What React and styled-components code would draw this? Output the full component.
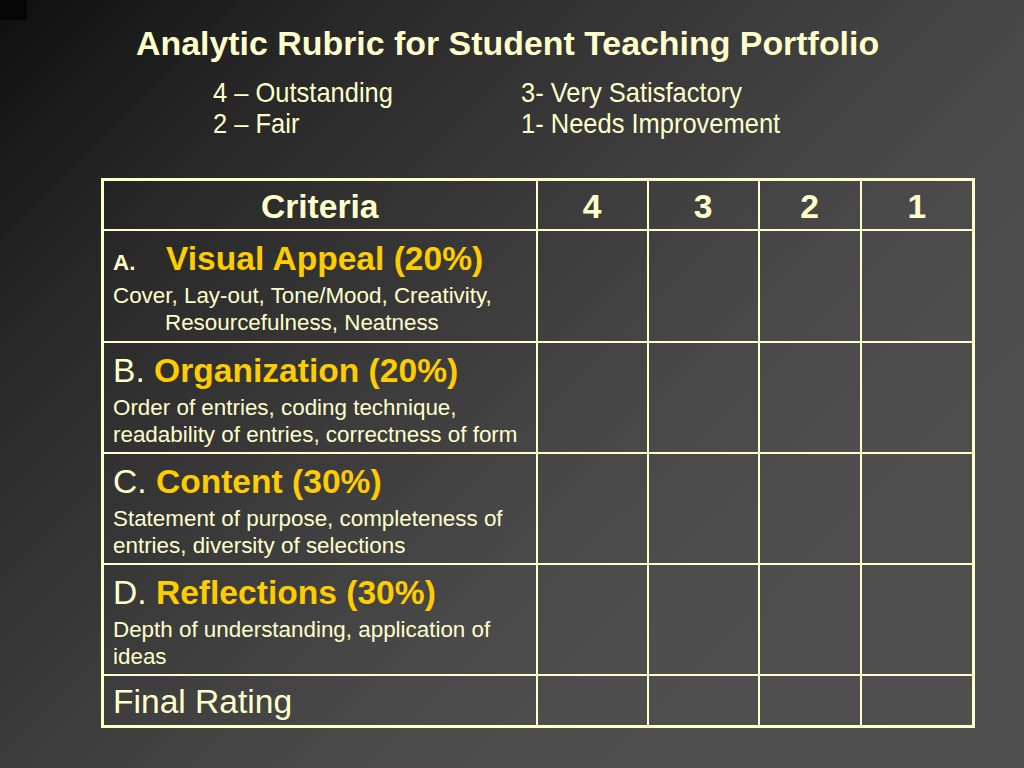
import React from "react";
import styled, { createGlobalStyle } from "styled-components";

const Global = createGlobalStyle`
  html, body { margin: 0; padding: 0; }
  body { font-family: "Liberation Sans", Arial, sans-serif; }
`;

const Page = styled.div`
  position: relative;
  width: 1024px;
  height: 768px;
  overflow: hidden;
  box-sizing: border-box;
  padding-top: 23px;
  color: #ffffcc;
  background: linear-gradient(135deg, #0f0f0f 0%, #1c1c1c 10%, #282828 20%, #3c3c3c 44%, #494949 60%, #4e4e4e 72%, #4f4f4f 100%);
  &::before {
    content: "";
    position: absolute;
    left: 0;
    top: 0;
    width: 27px;
    height: 20px;
    background: #050505;
  }
`;

const Title = styled.h1`
  margin: 0;
  padding-left: 136px;
  font-size: 33.9px;
  line-height: 40px;
  font-weight: bold;
  color: #ffffcc;
  white-space: nowrap;
`;

const Legend = styled.div`
  display: grid;
  grid-template-columns: 308px 1fr;
  padding-left: 213px;
  margin-top: 14px;
`;

const LegendItem = styled.div`
  font-size: 28px;
  line-height: 31px;
  white-space: nowrap;
  transform: scaleX(0.91);
  transform-origin: left center;
`;

const Table = styled.table`
  margin: 39px 0 0 101px;
  width: 871px;
  table-layout: fixed;
  border-collapse: collapse;
  border: 3px solid #ffffcc;
`;

const Row = styled.tr`
  height: ${(p) => p.$h}px;
`;

const HeadCell = styled.th`
  border: 2px solid #ffffcc;
  font-size: 33.6px;
  font-weight: bold;
  text-align: center;
  vertical-align: middle;
  padding: 5px 0 0;
  color: #ffffcc;
`;

const Cell = styled.td`
  border: 2px solid #ffffcc;
  vertical-align: ${(p) => (p.$middle ? "middle" : "top")};
  padding: ${(p) => (p.$middle ? "3px 0 0 9px" : "9px 8px 0 9px")};
`;

const Heading = styled.div`
  font-size: 33.6px;
  line-height: 38px;
  white-space: nowrap;
`;

const Letter = styled.span`
  font-weight: ${(p) => (p.$bold ? "bold" : "normal")};
  font-size: ${(p) => (p.$bold ? "22.4px" : "inherit")};
  line-height: ${(p) => (p.$bold ? "1" : "inherit")};
  display: ${(p) => (p.$bold ? "inline-block" : "inline")};
  width: ${(p) => (p.$bold ? "53px" : "auto")};
`;

const Criterion = styled.span`
  font-weight: bold;
  color: #ffcc00;
`;

const Desc = styled.div`
  margin-top: 4px;
  font-size: 22.4px;
  line-height: 27px;
  padding-left: ${(p) => (p.$hang ? "52px" : "0")};
  text-indent: ${(p) => (p.$hang ? "-52px" : "0")};
`;

const FinalText = styled.div`
  font-size: 33.6px;
  line-height: 40px;
`;

const rows = [
  {
    letter: "A.",
    bold: true,
    name: "Visual Appeal (20%)",
    desc: "Cover, Lay-out, Tone/Mood, Creativity, Resourcefulness, Neatness",
    hang: true,
    h: 112,
  },
  {
    letter: "B. ",
    name: "Organization (20%)",
    desc: "Order of entries, coding technique, readability of entries, correctness of form",
    h: 111,
  },
  {
    letter: "C. ",
    name: "Content (30%)",
    desc: "Statement of purpose, completeness of entries, diversity of selections",
    h: 111,
  },
  {
    letter: "D. ",
    name: "Reflections (30%)",
    desc: "Depth of understanding, application of ideas",
    h: 111,
  },
];

const EmptyCells = () => (
  <>
    <Cell />
    <Cell />
    <Cell />
    <Cell />
  </>
);

export default function App() {
  return (
    <>
      <Global />
      <Page>
        <Title>Analytic Rubric for Student Teaching Portfolio</Title>
        <Legend>
          <LegendItem>4 – Outstanding</LegendItem>
          <LegendItem>3- Very Satisfactory</LegendItem>
          <LegendItem>2 – Fair</LegendItem>
          <LegendItem>1- Needs Improvement</LegendItem>
        </Legend>
        <Table>
          <colgroup>
            <col style={{ width: 434 }} />
            <col style={{ width: 111 }} />
            <col style={{ width: 111 }} />
            <col style={{ width: 102 }} />
            <col style={{ width: 113 }} />
          </colgroup>
          <thead>
            <Row $h={50}>
              <HeadCell>Criteria</HeadCell>
              <HeadCell>4</HeadCell>
              <HeadCell>3</HeadCell>
              <HeadCell>2</HeadCell>
              <HeadCell>1</HeadCell>
            </Row>
          </thead>
          <tbody>
            {rows.map((r) => (
              <Row key={r.name} $h={r.h}>
                <Cell>
                  <Heading>
                    <Letter $bold={r.bold}>{r.letter}</Letter>
                    <Criterion>{r.name}</Criterion>
                  </Heading>
                  <Desc $hang={r.hang}>{r.desc}</Desc>
                </Cell>
                <EmptyCells />
              </Row>
            ))}
            <Row $h={52}>
              <Cell $middle>
                <FinalText>Final Rating</FinalText>
              </Cell>
              <EmptyCells />
            </Row>
          </tbody>
        </Table>
      </Page>
    </>
  );
}
